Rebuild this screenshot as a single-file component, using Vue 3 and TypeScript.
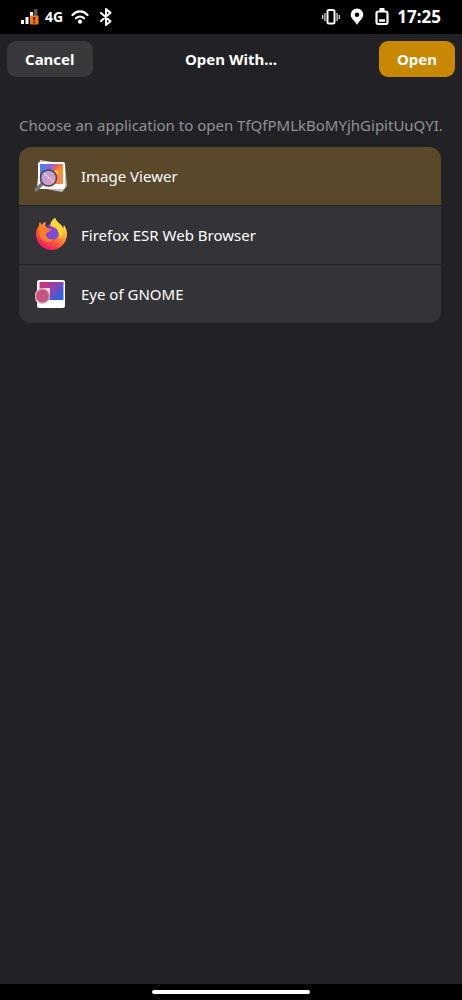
<script setup lang="ts">
import { ref } from 'vue'

interface AppEntry {
  id: 'viewer' | 'firefox' | 'eog'
  name: string
}

const apps: AppEntry[] = [
  { id: 'viewer', name: 'Image Viewer' },
  { id: 'firefox', name: 'Firefox ESR Web Browser' },
  { id: 'eog', name: 'Eye of GNOME' },
]
const selected = ref<AppEntry['id']>('viewer')
const fileName = 'TfQfPMLkBoMYjhGipitUuQYI'
</script>

<template>
  <div class="screen">
    <div class="status">
      <div class="group">
        <svg class="signal" width="18" height="18" viewBox="0 0 18 18" aria-label="Mobile signal">
          <path d="M0 12h3v4H0zM4.500 9h3v7h-3zM9 4h3v12H9z" fill="#fff" />
          <path d="M13 1h3.500v8H13z" fill="#555" />
          <rect x="9" y="7.500" width="8.500" height="9" rx="1" fill="#f57c00" />
          <path d="M12.200 9h2v3.500h-2zM12.200 13.500h2v1.800h-2z" fill="#3d1f00" />
        </svg>
        <span class="network">4G</span>
        <svg class="wifi" width="18" height="16" viewBox="0 0 18 16" aria-label="Wi-Fi">
          <g fill="none" stroke="#fff" stroke-width="2.200" stroke-linecap="round">
            <path d="M1.500 6C5.800 1.200 12.200 1.200 16.500 6" />
            <path d="M5 9.300C7.300 7 10.700 7 13 9.300" />
          </g>
          <circle cx="9" cy="12.700" r="2.100" fill="#fff" />
        </svg>
        <svg class="bluetooth" width="12" height="18" viewBox="0 0 12 18" aria-label="Bluetooth">
          <path d="M1 5l9.500 8.200L6 17V1l4.500 3.800L1 13" fill="none" stroke="#fff" stroke-width="2" stroke-linejoin="round" stroke-linecap="round" />
        </svg>
      </div>
      <div class="group">
        <svg width="18" height="18" viewBox="0 0 18 18" aria-label="Vibrate">
          <rect x="5.500" y="2" width="7" height="13.500" rx="1.500" fill="none" stroke="#fff" stroke-width="2" />
          <path d="M.7 7v4M2.900 5v8M15.100 5v8M17.300 7v4" stroke="#fff" stroke-width="1.100" />
        </svg>
        <svg class="pin" width="14" height="18" viewBox="0 0 14 18" aria-label="Location">
          <path d="M7 .5a6.300 6.300 0 0 0-6.300 6.300c0 4 4.800 6.700 6.300 10.200 1.500-3.500 6.300-6.200 6.300-10.200A6.300 6.300 0 0 0 7 .5zm0 4a2.300 2.300 0 1 1 0 4.600 2.300 2.300 0 0 1 0-4.600z" fill="#fff" fill-rule="evenodd" />
        </svg>
        <svg class="battery" width="14" height="18" viewBox="0 0 14 18" aria-label="Battery">
          <rect x="1.500" y="3.500" width="11" height="12.500" rx="2" fill="none" stroke="#fff" stroke-width="2.200" />
          <path d="M4.500 0h5v3.500h-5zM4 11.200h6v2.500H4z" fill="#fff" />
        </svg>
        <time class="clock">17:25</time>
      </div>
    </div>

    <header class="header">
      <button class="action cancel" type="button">Cancel</button>
      <h1 class="title">Open With…</h1>
      <button class="action open" type="button">Open</button>
    </header>

    <main class="content">
      <p class="prompt">Choose an application to open {{ fileName }}.</p>
      <div class="list">
        <button
          v-for="app in apps"
          :key="app.id"
          class="row"
          :class="{ selected: selected === app.id }"
          type="button"
          :aria-pressed="selected === app.id"
          @click="selected = app.id"
        >
          <svg v-if="app.id === 'viewer'" class="icon" viewBox="0 0 36 36" aria-hidden="true">
            <defs>
              <linearGradient id="photo" x1="0" y1="0" x2="1" y2=".4">
                <stop offset="0" stop-color="#3f83ee" />
                <stop offset=".45" stop-color="#8c65d4" />
                <stop offset=".72" stop-color="#f66b4d" />
                <stop offset="1" stop-color="#ff9c18" />
              </linearGradient>
              <linearGradient id="lens" x1="0" y1="0" x2="1" y2="1">
                <stop offset="0" stop-color="#a9a0e0" />
                <stop offset="1" stop-color="#e59ab9" />
              </linearGradient>
            </defs>
            <path d="M7 2l24 4-3 26-24-4z" fill="#d2cfc8" />
            <path d="M8 7l24-1 2 22-5 6-21-4z" fill="#c2bfb8" />
            <rect x="5" y="4" width="27" height="27" rx="2" fill="#fff" />
            <path d="M7 6h23v20H7z" fill="url(#photo)" />
            <path d="M7 24l10-10 7 12H7z" fill="#d99ac5" />
            <path d="M20 26l4-8c2-3 4-3 6-1v9z" fill="#fa8a4a" />
            <circle cx="24" cy="14" r="2.500" fill="#ffb03b" />
            <path d="M9 26l-6 6" stroke="#77777b" stroke-width="3.500" stroke-linecap="round" />
            <circle cx="15.500" cy="20" r="8" fill="url(#lens)" stroke="#48434e" stroke-width="1.500" />
            <path d="M11 15l10 9" stroke="#ecc0dc" stroke-width="1.500" />
          </svg>

          <svg v-else-if="app.id === 'firefox'" class="icon" viewBox="0 0 36 36" aria-hidden="true">
            <defs>
              <linearGradient id="flame" x1=".85" y1=".1" x2=".25" y2=".95">
                <stop offset="0" stop-color="#fff044" />
                <stop offset=".35" stop-color="#ffa62c" />
                <stop offset=".65" stop-color="#ff573b" />
                <stop offset="1" stop-color="#ed146d" />
              </linearGradient>
              <linearGradient id="globe" x1="0" y1="0" x2="0" y2="1">
                <stop offset="0" stop-color="#8f3fd6" />
                <stop offset="1" stop-color="#6a52d6" />
              </linearGradient>
            </defs>
            <path d="M22 1c1 3 4 5 6 7 1 1 2 2 2 4l1-4c2 3 3 6 3 9 0 9-7 16-15.500 16S3 26 3 17.500C3 14 4 11 6 9c0-2 0-3 1-4 1 1 1 2 2 3 1-2 2-3 4-3-1 2-1 3 0 5l4-1c1-4 2-6 5-8z" fill="url(#flame)" />
            <path d="M13 10c1-2 3-3 5-3 4 1 6 3 7 6l-6 3z" fill="#7b38c8" />
            <circle cx="19" cy="17" r="6.500" fill="url(#globe)" />
            <path d="M6 10c3-1 5 0 7 1 3 0 5 1 5 2s-4 2-5 4c0 4 3 6 8 5-4 5-12 3-14-2-1-3-2-7-1-10z" fill="#ff7d28" />
            <path d="M17 9c1-4 2-6 5-8 1 3 4 5 6 7 3 5 2 10-1 14 0-5-1-9-5-11-1-1-3-1-5-2z" fill="#ffd638" />
          </svg>

          <svg v-else class="icon" viewBox="0 0 36 36" aria-hidden="true">
            <defs>
              <linearGradient id="picture" x1="0" y1="0" x2="1" y2=".7">
                <stop offset="0" stop-color="#df3559" />
                <stop offset=".45" stop-color="#9d3da6" />
                <stop offset="1" stop-color="#2868dc" />
              </linearGradient>
              <linearGradient id="glass" x1="0" y1="0" x2="1" y2="1">
                <stop offset="0" stop-color="#cf4a6c" />
                <stop offset="1" stop-color="#c15c90" />
              </linearGradient>
            </defs>
            <rect x="4" y="4" width="28" height="28" rx="2" fill="#fff" />
            <path d="M6.500 6h24v18h-24z" fill="url(#picture)" />
            <path d="M2 20c0-5 3-8 8-8h7v8c0 5-3 8-8 8s-7-3-7-8z" fill="#e9cfd6" />
            <circle cx="9.500" cy="20" r="6.800" fill="url(#glass)" stroke="#b7a5a9" stroke-width="1" />
          </svg>
          <span>{{ app.name }}</span>
        </button>
      </div>
    </main>

    <div class="navigation"><span class="handle"></span></div>
  </div>
</template>

<style>
body {
  background: #000;
}
</style>

<style scoped>
.screen {
  box-sizing: border-box;
  display: flex;
  flex-direction: column;
  min-height: 100vh;
  background: #222226;
  color: #fff;
  font-family: "Noto Sans", sans-serif;
  font-size: 15px;
  line-height: 20px;
}
.status {
  display: flex;
  justify-content: space-between;
  align-items: center;
  height: 34px;
  padding: 0 21px;
  background: #000;
}
.group {
  display: flex;
  align-items: center;
}
.network {
  margin: 0 8px 0 6px;
  font-size: 14px;
  font-weight: 700;
}
.bluetooth {
  margin-left: 11px;
}
.pin {
  margin-left: 10px;
}
.battery {
  margin: 0 8px 0 11px;
}
.clock {
  font-size: 17px;
  font-weight: 700;
}
.header {
  display: grid;
  grid-template-columns: 1fr auto 1fr;
  align-items: center;
  height: 50px;
  padding: 0 7px;
}
.action {
  height: 36px;
  padding: 0 18px;
  border: 0;
  border-radius: 9px;
  color: #fff;
  font: inherit;
  font-weight: 700;
}
.cancel {
  justify-self: start;
  background: #39393c;
}
.open {
  justify-self: end;
  background: #c88800;
}
.title {
  margin: 0;
  font-size: 15px;
  font-weight: 700;
}
.content {
  flex: 1;
  padding: 31px 21px 32px 19px;
}
.prompt {
  margin: 0 0 12px;
  color: #919193;
  white-space: nowrap;
}
.list {
  display: flex;
  flex-direction: column;
  gap: 1px;
  overflow: hidden;
  border-radius: 12px;
  background: #232327;
}
.row {
  display: flex;
  align-items: center;
  gap: 12px;
  height: 58px;
  padding: 0 14px;
  border: 0;
  background: #343438;
  color: #fff;
  font: inherit;
  text-align: left;
}
.selected {
  background: #5a482a;
}
.icon {
  flex: none;
  width: 36px;
  height: 36px;
}
.navigation {
  display: flex;
  justify-content: center;
  align-items: center;
  height: 16px;
  background: #000;
}
.handle {
  width: 34%;
  height: 4px;
  border-radius: 2px;
  background: #fff;
}
</style>
